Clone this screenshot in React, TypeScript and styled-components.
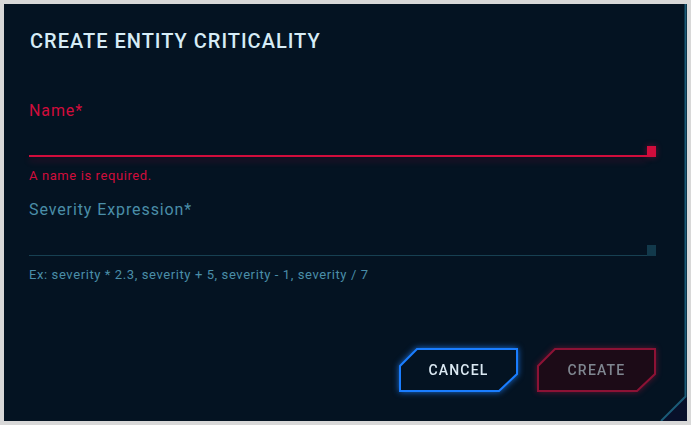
import React from "react";
import styled, { createGlobalStyle } from "styled-components";

const Global = createGlobalStyle`
  html, body { margin: 0; padding: 0; background: #d8d8d8; }
  body { font-family: "Roboto", "Noto Sans", sans-serif; }
  * { box-sizing: border-box; }
`;

const Page = styled.div`
  padding: 4px;
  width: 691px;
  height: 425px;
`;

const Dialog = styled.div`
  position: relative;
  width: 683px;
  height: 417px;
  background: #041322;
  padding: 25px 31px 0 25px;
  display: flex;
  flex-direction: column;
`;

const Frame = styled.svg`
  position: absolute;
  inset: 0;
  pointer-events: none;
`;

const Title = styled.h1`
  margin: 0 0 0 1px;
  font-size: 20px;
  line-height: 24px;
  font-weight: 500;
  letter-spacing: 1px;
  color: #d6ecf6;
`;

const Field = styled.div<{ $top: number }>`
  margin-top: ${(p) => p.$top}px;
  display: flex;
  flex-direction: column;
`;

const Label = styled.label<{ $error?: boolean }>`
  font-size: 16px;
  line-height: 20px;
  letter-spacing: 0.9px;
  color: ${(p) => (p.$error ? "#d10d3c" : "#4a8ea8")};
`;

const InputRow = styled.div`
  margin-top: 25px;
  display: flex;
  align-items: flex-end;
  height: 11px;
`;

const Line = styled.div<{ $error?: boolean }>`
  flex: 1;
  height: ${(p) => (p.$error ? 2 : 1)}px;
  background: ${(p) => (p.$error ? "#d10d3c" : "#174052")};
  box-shadow: ${(p) => (p.$error ? "0 4px 6px rgba(209,13,60,0.3)" : "none")};
`;

const Square = styled.div<{ $error?: boolean }>`
  width: 9px;
  height: 11px;
  background: ${(p) => (p.$error ? "#d10d3c" : "#12394b")};
  box-shadow: ${(p) => (p.$error ? "0 0 6px rgba(209,13,60,0.45)" : "none")};
`;

const Help = styled.div<{ $error?: boolean }>`
  margin-top: 11px;
  font-size: 13px;
  line-height: 16px;
  letter-spacing: 0.6px;
  color: ${(p) => (p.$error ? "#d10d3c" : "#4a8ea8")};
`;

const Actions = styled.div`
  margin-top: auto;
  margin-bottom: 29px;
  display: flex;
  justify-content: flex-end;
  gap: 19px;
`;

const ButtonBase = styled.button<{ $variant: "primary" | "danger" }>`
  position: relative;
  width: 119px;
  height: 44px;
  border: none;
  background: none;
  padding: 0;
  cursor: pointer;
  font-family: "Roboto", "Noto Sans", sans-serif;
  font-size: 14px;
  font-weight: 500;
  letter-spacing: 1.2px;
  color: ${(p) => (p.$variant === "primary" ? "#dbe9f3" : "#7f8690")};
  filter: ${(p) =>
    p.$variant === "primary"
      ? "drop-shadow(0 0 3px rgba(30,130,255,0.8))"
      : "drop-shadow(0 0 3px rgba(200,20,60,0.45))"};
  & > span {
    position: relative;
  }
`;

const ButtonShape = styled.svg`
  position: absolute;
  inset: 0;
`;

function CutButton({
  label,
  variant,
}: {
  label: string;
  variant: "primary" | "danger";
}) {
  const stroke = variant === "primary" ? "#1a7dff" : "#8c1235";
  const fill = variant === "primary" ? "#041322" : "#1c0b17";
  return (
    <ButtonBase $variant={variant} disabled={variant === "danger"}>
      <ButtonShape width="119" height="44" viewBox="0 0 119 44">
        <polygon
          points="18,1 118,1 118,26 100,43 1,43 1,18"
          fill={fill}
          stroke={stroke}
          strokeWidth="2"
        />
      </ButtonShape>
      <span>{label}</span>
    </ButtonBase>
  );
}

export default function App() {
  return (
    <Page>
      <Global />
      <Dialog>
        <Frame width="683" height="417" viewBox="0 0 683 417">
          <polygon points="683,392 683,417 658,417" fill="#08102a" />
          <polyline
            points="681.5,0 681.5,392.5 657,417"
            fill="none"
            stroke="#1b5b77"
            strokeWidth="2"
          />
        </Frame>
        <Title>CREATE ENTITY CRITICALITY</Title>
        <Field $top={48}>
          <Label $error>Name*</Label>
          <InputRow>
            <Line $error />
            <Square $error />
          </InputRow>
          <Help $error>A name is required.</Help>
        </Field>
        <Field $top={16}>
          <Label>Severity Expression*</Label>
          <InputRow>
            <Line />
            <Square />
          </InputRow>
          <Help>Ex: severity * 2.3, severity + 5, severity - 1, severity / 7</Help>
        </Field>
        <Actions>
          <CutButton label="CANCEL" variant="primary" />
          <CutButton label="CREATE" variant="danger" />
        </Actions>
      </Dialog>
    </Page>
  );
}
